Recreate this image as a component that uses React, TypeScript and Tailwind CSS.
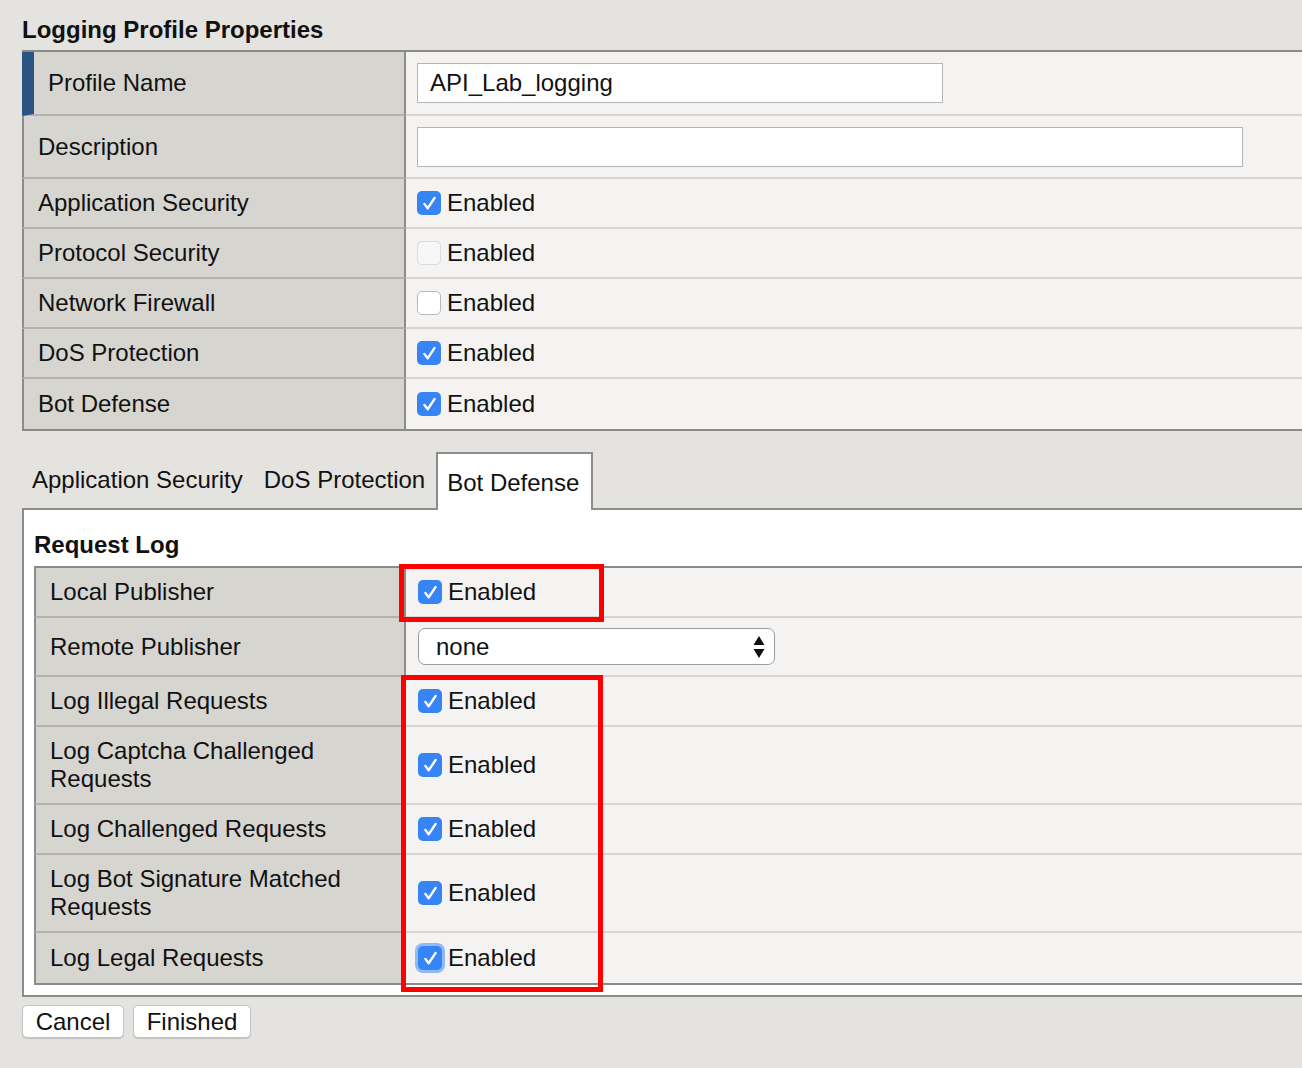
import React from 'react';

const font = "font-['Liberation_Sans',Arial,Helvetica,sans-serif]";

const Check: React.FC<{ checked?: boolean; faint?: boolean; focus?: boolean }> = ({ checked, faint, focus }) => {
    if (!checked) {
        return (
            <span className={`inline-block w-[24px] h-[24px] rounded-[5px] border ${faint ? 'border-[#dcdcdc] bg-[#f7f7f7]' : 'border-[#b8b8b8] bg-white'}`} />
        );
    }
    return (
        <span className={`inline-flex items-center justify-center w-[24px] h-[24px] rounded-[5px] bg-[#3784f6] ${focus ? 'ring-[3px] ring-[#8fbaf5]' : ''}`}>
            <svg viewBox="0 0 24 24" className="w-[19px] h-[19px]" fill="none" stroke="white" strokeWidth="3" strokeLinecap="round" strokeLinejoin="round">
                <path d="M5.5 12.5l4.2 5.5L18.5 5" />
            </svg>
        </span>
    );
};

const Enabled: React.FC<{ checked?: boolean; faint?: boolean; focus?: boolean }> = (p) => (
    <div className="flex items-center gap-[6px]">
        <Check {...p} />
        <span>Enabled</span>
    </div>
);

interface RowProps {
    label: React.ReactNode;
    h: string;
    first?: boolean;
    last?: boolean;
    labelW: string;
    valuePad: string;
    children?: React.ReactNode;
}

const Row: React.FC<RowProps> = ({ label, h, first, last, labelW, valuePad, children }) => (
    <div className={`flex ${h}`}>
        <div
            className={`${labelW} shrink-0 flex items-center pl-[14px] pr-3 bg-[#d6d5d0] border-r-2 border-r-[#8c8c8c] border-b-2 ${
                first ? 'border-l-[12px] border-l-[#2b5485]' : 'border-l-2 border-l-[#8c8c8c]'
            } ${last ? 'border-b-[#8a8a8a]' : 'border-b-[#b3b2ae]'}`}
        >
            <span className="leading-[28px]">{label}</span>
        </div>
        <div className={`flex-1 flex items-center ${valuePad} bg-[#f4f3f1] border-b-2 ${last ? 'border-b-[#8a8a8a]' : 'border-b-[#d6d5d2]'}`}>
            {children}
        </div>
    </div>
);

export default function App() {
    const top = { labelW: 'w-[384px]', valuePad: 'pl-[11px]' };
    const inner = { labelW: 'w-[372px]', valuePad: 'pl-[12px]' };

    return (
        <div className={`${font} min-h-[1068px] bg-[#e4e3df] text-[24px] text-[#111] pl-[22px] pt-[16px]`}>
            <h1 className="font-bold leading-[28px] h-[34px]">Logging Profile Properties</h1>

            <div className="border-t-2 border-t-[#8a8a8a]">
                <Row {...top} first label="Profile Name" h="h-[64px]">
                    <div className="w-[526px] h-[40px] bg-white border border-[#b5b5b5] flex items-center pl-[12px]">API_Lab_logging</div>
                </Row>
                <Row {...top} label="Description" h="h-[63px]">
                    <div className="w-[826px] h-[40px] bg-white border border-[#b5b5b5]" />
                </Row>
                <Row {...top} label="Application Security" h="h-[50px]"><Enabled checked /></Row>
                <Row {...top} label="Protocol Security" h="h-[50px]"><Enabled faint /></Row>
                <Row {...top} label="Network Firewall" h="h-[50px]"><Enabled /></Row>
                <Row {...top} label="DoS Protection" h="h-[50px]"><Enabled checked /></Row>
                <Row {...top} last label="Bot Defense" h="h-[52px]"><Enabled checked /></Row>
            </div>

            <div className="mt-[21px] flex items-end">
                <div className="h-[56px] flex items-center px-[10px]">Application Security</div>
                <div className="h-[56px] flex items-center pl-[11px] pr-[11px]">DoS Protection</div>
                <div className="relative z-10 -mb-[2px] h-[58px] w-[157px] flex items-center pl-[9px] pt-[2px] bg-white border-2 border-b-0 border-[#8c8c8c]">
                    Bot Defense
                </div>
            </div>

            <div className="bg-white border-2 border-r-0 border-[#8c8c8c] pl-[10px] pt-[21px] pb-[10px]">
                <div className="font-bold leading-[28px] mb-[7px]">Request Log</div>
                <div className="relative border-t-2 border-t-[#8a8a8a]">
                    <Row {...inner} label="Local Publisher" h="h-[50px]"><Enabled checked /></Row>
                    <Row {...inner} label="Remote Publisher" h="h-[59px]">
                        <div className="relative w-[357px] h-[37px] rounded-[7px] border-[1.5px] border-[#9c9c9c] bg-white flex items-center pl-[17px]">
                            none
                            <svg viewBox="0 0 12 24" className="absolute right-[9px] top-[6px] w-[12px] h-[24px]" fill="#111">
                                <path d="M6 1L11.5 10H0.5Z" />
                                <path d="M6 23L11.5 14H0.5Z" />
                            </svg>
                        </div>
                    </Row>
                    <Row {...inner} label="Log Illegal Requests" h="h-[50px]"><Enabled checked /></Row>
                    <Row {...inner} label="Log Captcha Challenged Requests" h="h-[78px]"><Enabled checked /></Row>
                    <Row {...inner} label="Log Challenged Requests" h="h-[50px]"><Enabled checked /></Row>
                    <Row {...inner} label="Log Bot Signature Matched Requests" h="h-[78px]"><Enabled checked /></Row>
                    <Row {...inner} last label="Log Legal Requests" h="h-[52px]"><Enabled checked focus /></Row>

                    <div className="absolute left-[365px] top-[-4px] w-[205px] h-[58px] border-[5px] border-[#ff0000] pointer-events-none" />
                    <div className="absolute left-[367px] top-[107px] w-[202px] h-[317px] border-[5px] border-[#ff0000] pointer-events-none" />
                </div>
            </div>

            <div className="mt-[8px] flex gap-[9px]">
                <button className="h-[33px] w-[102px] bg-white border border-[#c4c4c4] rounded-[5px] shadow-[0_1px_1px_rgba(0,0,0,0.15)] leading-none">Cancel</button>
                <button className="h-[33px] w-[118px] bg-white border border-[#c4c4c4] rounded-[5px] shadow-[0_1px_1px_rgba(0,0,0,0.15)] leading-none">Finished</button>
            </div>
        </div>
    );
}
